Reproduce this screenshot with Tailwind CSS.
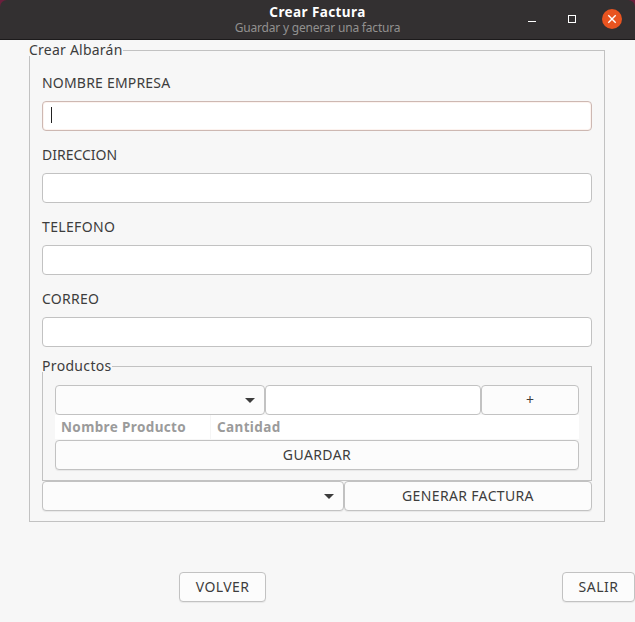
<!DOCTYPE html>
<html lang="es">
<head>
<meta charset="utf-8">
<title>Crear Factura</title>
<script src="https://cdn.jsdelivr.net/npm/@tailwindcss/browser@4"></script>
</head>
<body class="w-[635px] h-[622px] overflow-hidden bg-[#f7f7f7] font-['Noto_Sans',sans-serif] text-[14px] leading-[18px] text-[#3d3d3d] whitespace-nowrap">
<div class="bg-[#6b1f3c]">
<header class="relative h-10 rounded-t-[7px] bg-[#333031] border-b border-[#1c1a1b] flex flex-col items-center pt-[3px]">
  <h1 class="font-bold text-[13.5px] leading-[18px] text-white tracking-[0.4px]">Crear Factura</h1>
  <p class="text-[12px] leading-[14px] text-[#929190] tracking-[-0.2px]">Guardar y generar una factura</p>
  <svg class="absolute left-[520px] top-[8px]" width="104" height="22" fill="none">
    <path d="M8 13.5h8" stroke="#fff"/>
    <rect x="48.5" y="7.5" width="7" height="7" stroke="#fff"/>
    <circle cx="92" cy="11" r="10" fill="#e95420"/>
    <path d="M88.3 7.3l7.4 7.4M95.7 7.3l-7.4 7.4" stroke="#fff" stroke-width="1.4"/>
  </svg>
</header>
</div>
<main class="pt-[10px] pl-[29px]">
  <section class="relative w-[576px] h-[472px] border border-[#c2c2c2] px-3">
    <h2 class="absolute -left-px -top-[10px] h-[15px] bg-[#f7f7f7] tracking-[0.23px]">Crear Albarán</h2>
    <div class="flex flex-col">
      <label class="pt-[23px] h-[50px] tracking-[0.2px]">NOMBRE EMPRESA</label>
      <div class="h-[30px] rounded-[4px] border border-[#cdb8b2] bg-white shadow-[inset_0_0_0_1px_#fdf3ef] pl-2 pt-[5px]"><div class="w-px h-4 bg-[#222]"></div></div>
      <label class="pt-[15px] h-[42px]">DIRECCION</label>
      <div class="h-[30px] rounded-[4px] border border-[#c2c2c2] bg-white"></div>
      <label class="pt-[15px] h-[42px] tracking-[0.35px]">TELEFONO</label>
      <div class="h-[30px] rounded-[4px] border border-[#c2c2c2] bg-white"></div>
      <label class="pt-[15px] h-[42px] tracking-[0.25px]">CORREO</label>
      <div class="h-[30px] rounded-[4px] border border-[#c2c2c2] bg-white"></div>
    </div>
    <section class="relative mt-[19px] h-[115px] border border-[#c2c2c2] px-3 pt-[18px]">
      <h3 class="absolute -left-px -top-[10px] h-[15px] bg-[#f7f7f7] tracking-[0.33px]">Productos</h3>
      <div class="flex">
        <button class="w-[210px] h-[30px] rounded-[4px] border border-[#c2c2c2] bg-[#fcfcfc] flex items-center justify-end pr-[9px]"><svg width="10" height="5"><path d="M0 0h10L5 5z" fill="#3d3d3d"/></svg></button>
        <div class="w-[216px] h-[30px] rounded-[4px] border border-[#c2c2c2] bg-white"></div>
        <button class="w-[98px] h-[30px] rounded-[4px] border border-[#c2c2c2] bg-[#fcfcfc]">+</button>
      </div>
      <div class="flex h-[25px] font-bold text-[13.5px] text-[#9b9b9b] tracking-[0.37px]">
        <div class="w-[156px] h-6 bg-white border-r border-[#f5f5f5] pl-[6px] pt-[3px]">Nombre Producto</div>
        <div class="w-[368px] h-6 bg-white pl-[6px] pt-[3px]">Cantidad</div>
      </div>
      <button class="block w-[524px] h-[30px] rounded-[4px] border border-[#c2c2c2] bg-[#fcfcfc] shadow-[0_1px_1px_#00000010] tracking-[0.4px]">GUARDAR</button>
    </section>
    <div class="flex">
      <button class="w-[302px] h-[30px] rounded-[4px] border border-[#c2c2c2] bg-[#fcfcfc] shadow-[0_1px_1px_#00000010] flex items-center justify-end pr-[9px]"><svg width="10" height="5"><path d="M0 0h10L5 5z" fill="#3d3d3d"/></svg></button>
      <button class="w-[248px] h-[30px] rounded-[4px] border border-[#c2c2c2] bg-[#fcfcfc] shadow-[0_1px_1px_#00000010] tracking-[0.35px]">GENERAR FACTURA</button>
    </div>
  </section>
  <div class="flex justify-between pl-[150px] pt-[50px]">
    <button class="w-[87px] h-[30px] rounded-[4px] border border-[#c2c2c2] bg-[#fcfcfc] shadow-[0_1px_1px_#00000010] tracking-[0.4px]">VOLVER</button>
    <button class="w-[73px] h-[30px] rounded-[4px] border border-[#c2c2c2] bg-[#fcfcfc] shadow-[0_1px_1px_#00000010] tracking-[0.5px]">SALIR</button>
  </div>
</main>
</body>
</html>
